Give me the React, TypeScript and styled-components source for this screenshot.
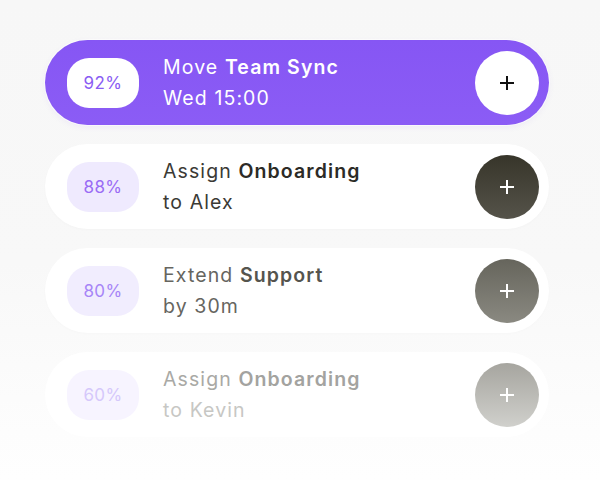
import React from "react";
import styled, { createGlobalStyle } from "styled-components";

const Global = createGlobalStyle`
  html, body { margin: 0; padding: 0; }
  body {
    width: 600px;
    height: 480px;
    overflow: hidden;
    background: linear-gradient(180deg, #f7f7f7 0%, #f8f8f8 55%, #fdfdfd 90%, #fefefe 100%);
    font-family: Inter, "Noto Sans", sans-serif;
  }
`;

type Tone = {
  cardBg: string;
  cardShadow: string;
  pillBg: string;
  pillText: string;
  text: string;
  strong: string;
  sub: string;
  btnBg: string;
  plus: string;
};

const tones: Record<string, Tone> = {
  active: {
    cardBg: "linear-gradient(180deg, #8656f4 0%, #8b5cf5 100%)",
    cardShadow: "0 0 0 1px rgba(255,255,255,0.6), 0 2px 6px rgba(120,80,220,0.08)",
    pillBg: "#ffffff",
    pillText: "#8a5cf3",
    text: "#ffffff",
    strong: "#ffffff",
    sub: "#ffffff",
    btnBg: "#ffffff",
    plus: "#111111",
  },
  first: {
    cardBg: "#ffffff",
    cardShadow: "0 1px 3px rgba(0,0,0,0.02)",
    pillBg: "#efeafe",
    pillText: "#9a6cf5",
    text: "#3b3a35",
    strong: "#2c2b26",
    sub: "#3b3a35",
    btnBg: "linear-gradient(180deg, #37352a 0%, #55534a 100%)",
    plus: "#ffffff",
  },
  second: {
    cardBg: "#ffffff",
    cardShadow: "0 1px 3px rgba(0,0,0,0.015)",
    pillBg: "#f1edfe",
    pillText: "#a785f7",
    text: "#66655f",
    strong: "#55544e",
    sub: "#66655f",
    btnBg: "linear-gradient(180deg, #66655c 0%, #8a8981 100%)",
    plus: "#ffffff",
  },
  third: {
    cardBg: "#ffffff",
    cardShadow: "none",
    pillBg: "#f7f4ff",
    pillText: "#d5c8fb",
    text: "#a9a9a5",
    strong: "#a3a3a0",
    sub: "#c7c7c4",
    btnBg: "linear-gradient(180deg, #a6a59f 0%, #d0d0cc 100%)",
    plus: "#ffffff",
  },
};

const List = styled.div`
  display: flex;
  flex-direction: column;
  gap: 19px;
  width: 504px;
  padding: 40px 0 0 45px;
`;

const Card = styled.div<{ $t: Tone }>`
  display: flex;
  align-items: center;
  height: 85px;
  box-sizing: border-box;
  padding: 0 10px 0 22px;
  border-radius: 43px;
  background: ${(p) => p.$t.cardBg};
  box-shadow: ${(p) => p.$t.cardShadow};
`;

const Pill = styled.div<{ $t: Tone }>`
  flex: none;
  width: 72px;
  height: 50px;
  border-radius: 22px;
  display: flex;
  align-items: center;
  justify-content: center;
  background: ${(p) => p.$t.pillBg};
  color: ${(p) => p.$t.pillText};
  font-size: 17px;
  font-weight: 400;
  letter-spacing: 0.4px;
`;

const Texts = styled.div`
  display: flex;
  flex-direction: column;
  margin-left: 24px;
  flex: 1;
`;

const Line = styled.div<{ $c: string }>`
  font-size: 19.5px;
  line-height: 31px;
  color: ${(p) => p.$c};
  letter-spacing: 1.1px;
`;

const Strong = styled.span<{ $c: string }>`
  font-weight: 600;
  color: ${(p) => p.$c};
`;

const AddButton = styled.div<{ $t: Tone }>`
  flex: none;
  width: 64px;
  height: 64px;
  border-radius: 50%;
  display: flex;
  align-items: center;
  justify-content: center;
  background: ${(p) => p.$t.btnBg};
`;

const Plus = ({ color }: { color: string }) => (
  <svg width="18" height="18" viewBox="0 0 18 18">
    <path d="M9 2v14M2 9h14" stroke={color} strokeWidth="2" strokeLinecap="butt" />
  </svg>
);

const items = [
  { tone: "active", pct: "92%", verb: "Move", name: "Team Sync", sub: "Wed 15:00" },
  { tone: "first", pct: "88%", verb: "Assign", name: "Onboarding", sub: "to Alex" },
  { tone: "second", pct: "80%", verb: "Extend", name: "Support", sub: "by 30m" },
  { tone: "third", pct: "60%", verb: "Assign", name: "Onboarding", sub: "to Kevin" },
];

export default function App() {
  return (
    <>
      <Global />
      <List>
        {items.map((it, i) => {
          const t = tones[it.tone];
          return (
            <Card key={i} $t={t}>
              <Pill $t={t}>{it.pct}</Pill>
              <Texts>
                <Line $c={t.text}>
                  {it.verb} <Strong $c={t.strong}>{it.name}</Strong>
                </Line>
                <Line $c={t.sub}>{it.sub}</Line>
              </Texts>
              <AddButton $t={t}>
                <Plus color={t.plus} />
              </AddButton>
            </Card>
          );
        })}
      </List>
    </>
  );
}
